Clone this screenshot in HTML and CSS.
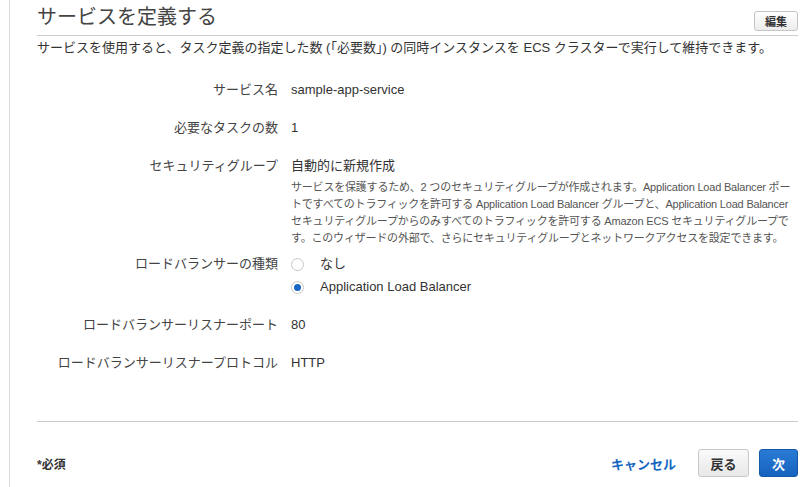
FILE: index.html
```html
<!DOCTYPE html>
<html lang="ja">
<head>
<meta charset="utf-8">
<title>サービスを定義する</title>
<link rel="stylesheet" href="styles.css">
</head>
<body>
<div class="page">
  <div class="header">
    <h1 class="title">サービスを定義する</h1>
    <button class="edit-btn">編集</button>
  </div>
  <p class="intro">サービスを使用すると、タスク定義の指定した数 (「必要数」) の同時インスタンスを ECS クラスターで実行して維持できます。</p>

  <div class="form">
    <div class="row">
      <div class="label">サービス名</div>
      <div class="value">sample-app-service</div>
    </div>
    <div class="row">
      <div class="label">必要なタスクの数</div>
      <div class="value">1</div>
    </div>
    <div class="row">
      <div class="label">セキュリティグループ</div>
      <div class="value">
        <div>自動的に新規作成</div>
        <p class="help"><span class="line">サービスを保護するため、2 つのセキュリティグループが作成されます。Application Load Balancer ポー</span><span class="line">トですべてのトラフィックを許可する Application Load Balancer グループと、Application Load Balancer</span><span class="line">セキュリティグループからのみすべてのトラフィックを許可する Amazon ECS セキュリティグループで</span><span class="line">す。このウィザードの外部で、さらにセキュリティグループとネットワークアクセスを設定できます。</span></p>
      </div>
    </div>
    <div class="row row-tight">
      <div class="label">ロードバランサーの種類</div>
      <div class="value options">
        <div class="option"><span class="radio"></span><span>なし</span></div>
        <div class="option"><span class="radio checked"></span><span>Application Load Balancer</span></div>
      </div>
    </div>
    <div class="row">
      <div class="label">ロードバランサーリスナーポート</div>
      <div class="value">80</div>
    </div>
    <div class="row">
      <div class="label">ロードバランサーリスナープロトコル</div>
      <div class="value">HTTP</div>
    </div>
  </div>

  <div class="footer">
    <div class="required">*必須</div>
    <div class="actions">
      <a class="cancel" href="#">キャンセル</a>
      <button class="btn btn-back">戻る</button>
      <button class="btn btn-next">次</button>
    </div>
  </div>
</div>
</body>
</html>
```

FILE: styles.css
```css
html, body {
  margin: 0;
  padding: 0;
  background: #fff;
}
body {
  font-family: "Liberation Sans", "Noto Sans CJK JP", sans-serif;
  color: #333;
  font-size: 13px;
}
.page {
  margin-left: 9px;
  border-left: 1px solid #dcdcdc;
  padding: 0 12px 0 27px;
  min-height: 487px;
  box-sizing: border-box;
}
.header {
  display: flex;
  justify-content: space-between;
  align-items: flex-end;
  height: 36px;
  border-bottom: 1px solid #cccccc;
  box-sizing: border-box;
  padding-bottom: 4px;
}
.title {
  margin: 0;
  align-self: flex-start;
  padding-top: 3px;
  font-size: 20px;
  line-height: 28px;
  font-weight: normal;
  color: #444;
}
.edit-btn {
  font-family: inherit;
  font-size: 11px;
  font-weight: bold;
  color: #333;
  width: 44px;
  height: 20px;
  padding: 0;
  border: 1px solid #c4c4c4;
  border-radius: 3px;
  background: linear-gradient(#ffffff, #ececec);
}
.intro {
  margin: 3px 0 0;
  line-height: 18px;
  color: #333;
}
.form {
  display: flex;
  flex-direction: column;
  gap: 20px;
  margin-top: 24px;
}
.row {
  display: grid;
  grid-template-columns: 241px 1fr;
  column-gap: 13px;
  line-height: 18px;
}
.row-tight {
  margin-top: -12px;
}
.label {
  text-align: right;
  color: #444;
}
.value {
  color: #333;
  min-width: 0;
}
.help {
  margin: 4px 0 0;
  font-size: 11px;
  line-height: 17px;
  letter-spacing: -0.2px;
  color: #555;
}
.help .line {
  display: block;
  white-space: nowrap;
}
.options {
  display: flex;
  flex-direction: column;
  gap: 5px;
}
.option {
  display: flex;
  align-items: center;
  gap: 16px;
}
.radio {
  width: 13px;
  height: 13px;
  border: 1px solid #c8c8c8;
  border-radius: 50%;
  box-sizing: border-box;
  background: #fff;
  position: relative;
  flex: none;
}
.radio.checked::after {
  content: "";
  position: absolute;
  left: 2px;
  top: 2px;
  width: 7px;
  height: 7px;
  border-radius: 50%;
  background: #1a66c4;
}
.footer {
  margin-top: 49px;
  border-top: 1px solid #cccccc;
  display: flex;
  justify-content: space-between;
  align-items: center;
  padding-top: 27px;
}
.required {
  font-size: 12px;
  font-weight: bold;
  color: #333;
}
.actions {
  display: flex;
  align-items: center;
}
.cancel {
  font-size: 13px;
  font-weight: bold;
  color: #1466c0;
  text-decoration: none;
  margin-right: 22px;
}
.btn {
  font-family: inherit;
  font-size: 13px;
  font-weight: bold;
  height: 28px;
  padding: 0;
  border-radius: 3px;
}
.btn-back {
  width: 51px;
  color: #333;
  border: 1px solid #c8c8c8;
  background: linear-gradient(#fafafa, #e8e8e8);
  margin-right: 10px;
}
.btn-next {
  width: 39px;
  color: #fff;
  border: 1px solid #1559a8;
  background: linear-gradient(#2a7bd6, #1562be);
}
```
